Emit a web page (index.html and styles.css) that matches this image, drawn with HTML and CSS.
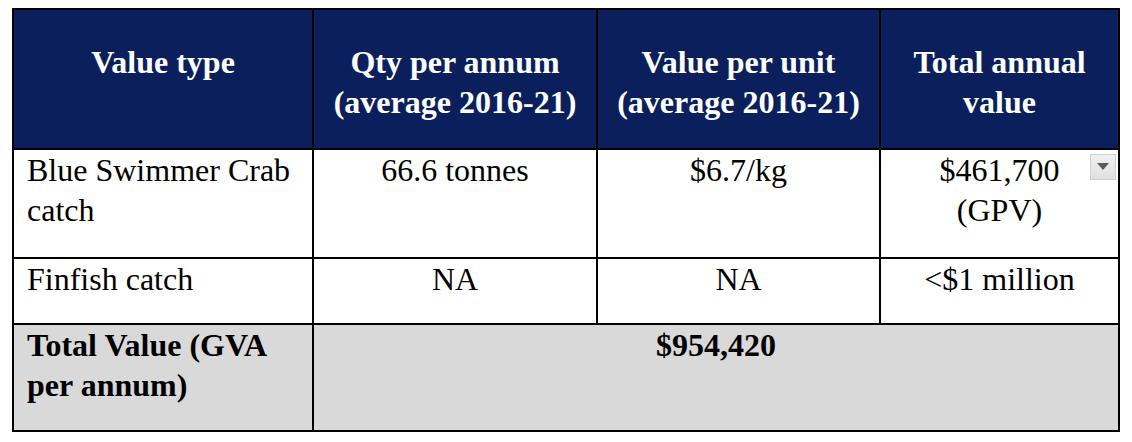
FILE: index.html
```html
<!DOCTYPE html>
<html lang="en">
<head>
<meta charset="utf-8">
<title>Value table</title>
<link rel="stylesheet" href="styles.css">
</head>
<body>
<table class="value-table">
  <colgroup>
    <col class="c1">
    <col class="c2">
    <col class="c3">
    <col class="c4">
  </colgroup>
  <thead>
    <tr>
      <th>Value type</th>
      <th>Qty per annum (average 2016-21)</th>
      <th>Value per unit (average 2016-21)</th>
      <th>Total annual value</th>
    </tr>
  </thead>
  <tbody>
    <tr class="r1">
      <td class="left">Blue Swimmer Crab catch</td>
      <td>66.6 tonnes</td>
      <td>$6.7/kg</td>
      <td class="has-drop">$461,700<br>(GPV)<span class="drop" aria-hidden="true"><svg width="12" height="8" viewBox="0 0 12 8"><path d="M0 0H12L6 7Z" fill="#5a5a5a"/></svg></span></td>
    </tr>
    <tr class="r2">
      <td class="left">Finfish catch</td>
      <td>NA</td>
      <td>NA</td>
      <td>&lt;$1 million</td>
    </tr>
    <tr class="r3 total">
      <td class="left">Total Value (GVA per annum)</td>
      <td colspan="3">$954,420</td>
    </tr>
  </tbody>
</table>
</body>
</html>
```

FILE: styles.css
```css
html, body {
  background: #ffffff;
}

body {
  margin: 8px 0 0 12px;
  font-family: "Liberation Serif", "Times New Roman", serif;
  font-size: 32px;
  line-height: 40px;
  color: #000000;
}

.value-table {
  border-collapse: collapse;
  table-layout: fixed;
  width: 1108px;
}

.c1 { width: 300px; }
.c2 { width: 284px; }
.c3 { width: 283px; }
.c4 { width: 239px; }

.value-table th,
.value-table td {
  border: 2px solid #000000;
  text-align: center;
  vertical-align: top;
  padding: 0 13px 25px;
}

.value-table th {
  background: #0a1f5b;
  color: #ffffff;
  font-weight: bold;
  padding-top: 32px;
  padding-bottom: 26px;
}

.value-table td.left {
  text-align: left;
}

.r1 td { padding-bottom: 27px; }
.r2 td { padding-bottom: 24px; }
.r3 td { padding-bottom: 25px; }

.total td {
  background: #d9d9d9;
  font-weight: bold;
}

.has-drop {
  position: relative;
}

.drop {
  position: absolute;
  top: 4px;
  right: 2px;
  width: 26px;
  height: 26px;
  box-sizing: border-box;
  border: 1px solid #d0d0d0;
  background: linear-gradient(#f0f0f0, #e0e0e0);
  display: flex;
  align-items: center;
  justify-content: center;
}

.drop svg {
  display: block;
}
```
